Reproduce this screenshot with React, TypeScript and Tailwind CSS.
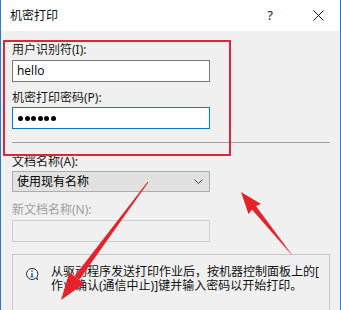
import React from "react";

const font = { fontFamily: '"Noto Sans", "Noto Sans CJK SC", sans-serif' };

const Label = ({ text, disabled }: { text: string; disabled?: boolean }) => (
    <div className={`text-[12px] leading-[16px] ${disabled ? "text-[#a0a0a0]" : "text-[#1a1a1a]"}`}>{text}</div>
);

const InfoIcon = () => (
    <svg width="14" height="14" viewBox="0 0 14 14">
        <path d="M7 1.5a5.5 5.5 0 1 0 3.6 9.7l2 1.3-0.8-2.2A5.5 5.5 0 0 0 7 1.5z" fill="#fff" stroke="#222" strokeWidth="1" />
        <rect x="6.2" y="3.4" width="1.6" height="1.5" fill="#1f6fd1" />
        <rect x="6.2" y="5.8" width="1.6" height="4.2" fill="#1f6fd1" />
        <rect x="5.2" y="9.4" width="3.6" height="1" fill="#1f6fd1" />
    </svg>
);

const Arrows = () => (
    <svg className="absolute left-0 top-0 pointer-events-none" width="341" height="310" viewBox="0 0 341 310">
        {/* arrow down-left */}
        <polygon points="148.4,182.3 147.6,181.7 74.5,276.2 79.3,279.7" fill="#e5222c" />
        <polygon points="61,300 69.5,272.3 76.9,278.2 84.3,283.5" fill="#e5222c" />
        {/* arrow up-left */}
        <polygon points="292.4,255.3 291.6,254.7 250.8,208.3 255.2,205" fill="#e5222c" />
        <polygon points="241,192 261,204 254,207 248.5,214" fill="#e5222c" />
    </svg>
);

export default function App() {
    return (
        <div className="relative w-[341px] h-[310px] overflow-hidden bg-[#f0f0f0]" style={font}>
            <div className="flex flex-col h-full border-x border-[#2b79d0]">
                {/* title bar */}
                <div className="h-[31px] bg-white flex items-center pl-[9px] shrink-0">
                    <span className="text-[12px] text-[#111]">机密打印</span>
                    <span className="ml-auto text-[13px] text-[#222] mr-[40px]">?</span>
                    <svg width="11" height="11" viewBox="0 0 11 11" className="mr-[16px]">
                        <path d="M0.5 0.5L10.5 10.5M10.5 0.5L0.5 10.5" stroke="#111" strokeWidth="1" />
                    </svg>
                </div>

                <div className="flex-1 pl-[11px] pr-[10px] pt-[11px]">
                    <Label text="用户识别符(I):" />
                    <div className="mt-[2px] w-[198px] h-[22px] bg-white border border-[#7a7a7a] flex items-center px-[4px]">
                        <span className="text-[12px] text-black" style={{ fontFamily: '"Open Sans", sans-serif' }}>hello</span>
                    </div>

                    <div className="mt-[8px]">
                        <Label text="机密打印密码(P):" />
                    </div>
                    <div className="mt-[1px] w-[198px] h-[22px] bg-white border border-[#0078d7] flex items-center gap-[1.5px] px-[5px]">
                        {[0, 1, 2, 3, 4, 5].map((i) => (
                            <span key={i} className="w-[5px] h-[5px] rounded-full bg-black" />
                        ))}
                    </div>

                    <div className="mt-[13px] h-px bg-[#a0a0a0]" />

                    <div className="mt-[11px]">
                        <Label text="文档名称(A):" />
                    </div>
                    <div className="mt-[1px] w-[198px] h-[21px] bg-[#e1e1e1] border border-[#adadad] flex items-center pl-[4px] pr-[6px]">
                        <span className="text-[12px] text-black">使用现有名称</span>
                        <svg width="9" height="6" viewBox="0 0 9 6" className="ml-auto">
                            <path d="M0.5 0.5L4.5 4.5L8.5 0.5" stroke="#444" strokeWidth="1" fill="none" />
                        </svg>
                    </div>

                    <div className="mt-[10px]">
                        <Label text="新文档名称(N):" disabled />
                    </div>
                    <div className="mt-[2px] w-[198px] h-[22px] bg-[#f0f0f0] border border-[#cccccc]" />

                    <div className="mt-[12px] border border-[#c8c8c8] h-[70px] flex items-start pt-[10px] pl-[12px] pr-[4px]">
                        <div className="mt-[2px] shrink-0">
                            <InfoIcon />
                        </div>
                        <div className="ml-[12px] text-[12px] leading-[14px] text-[#111] whitespace-nowrap">
                            <div>从驱动程序发送打印作业后，按机器控制面板上的[</div>
                            <div>作业确认(通信中止)]键并输入密码以开始打印。</div>
                        </div>
                    </div>
                </div>
            </div>

            {/* annotations */}
            <div className="absolute left-[3px] top-[40px] w-[228px] h-[116px] border-2 border-[#d8283a] pointer-events-none" />
            <Arrows />
        </div>
    );
}
